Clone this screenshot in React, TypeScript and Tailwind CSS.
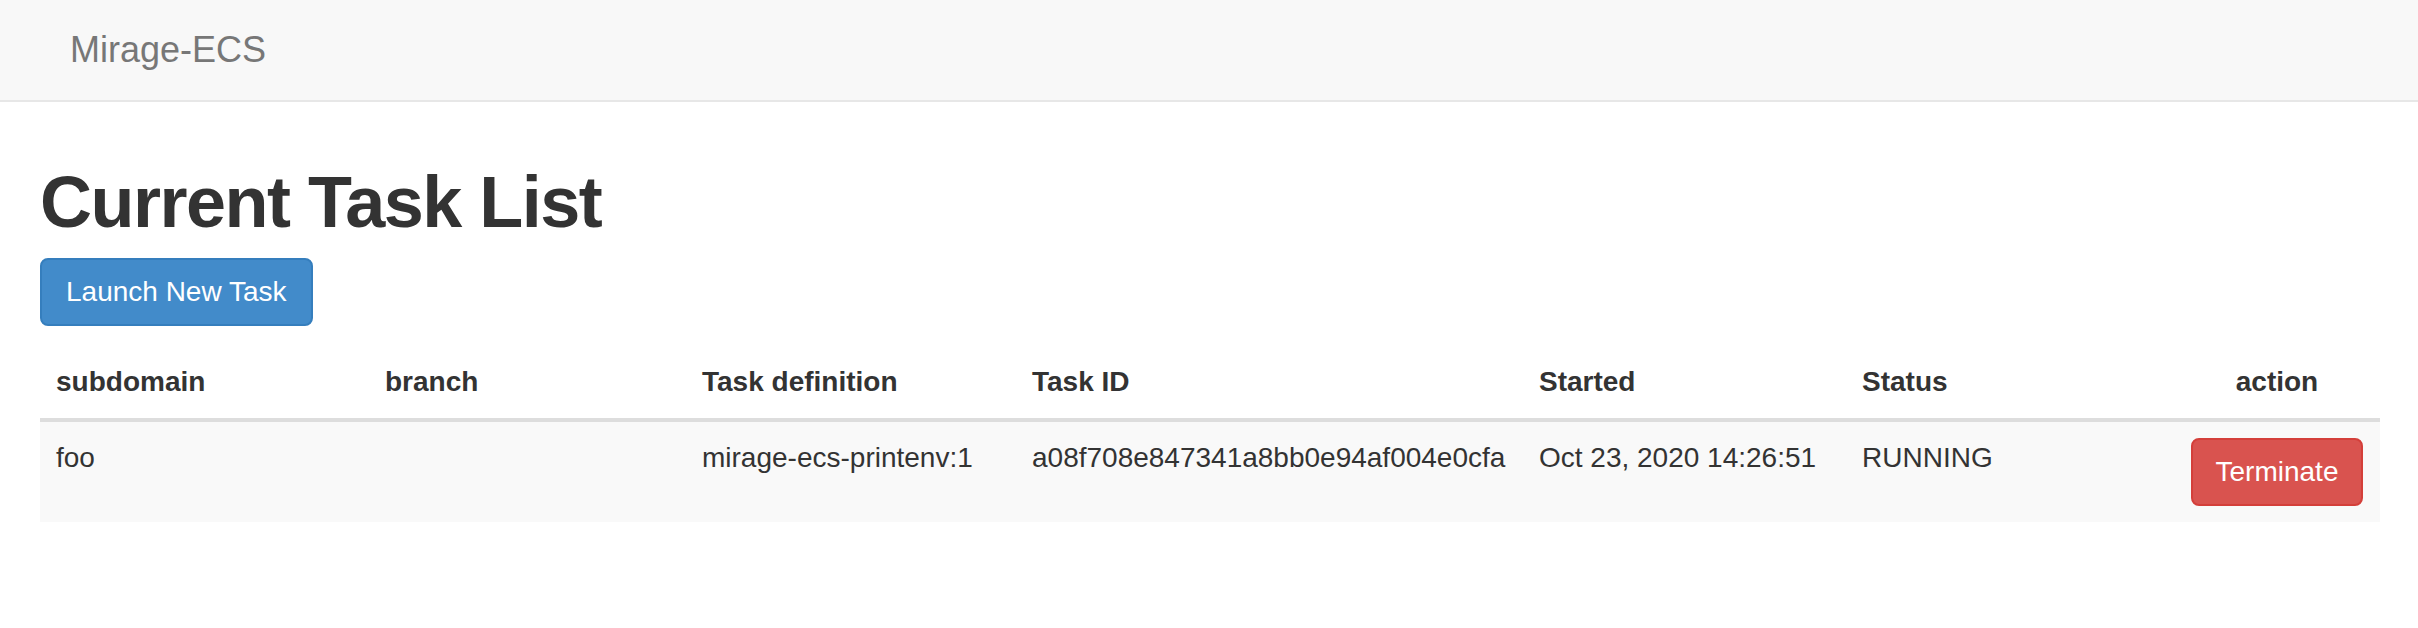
interface Task {
  subdomain: string;
  branch: string;
  taskDef: string;
  taskId: string;
  started: string;
  status: string;
}

const tasks: Task[] = [
  {
    subdomain: 'foo',
    branch: '',
    taskDef: 'mirage-ecs-printenv:1',
    taskId: 'a08f708e847341a8bb0e94af004e0cfa',
    started: 'Oct 23, 2020 14:26:51',
    status: 'RUNNING',
  },
];

const columns = [
  { label: 'subdomain', width: 'w-[329px]' },
  { label: 'branch', width: 'w-[317px]' },
  { label: 'Task definition', width: 'w-[330px]' },
  { label: 'Task ID', width: 'w-[507px]' },
  { label: 'Started', width: 'w-[323px]' },
  { label: 'Status', width: 'w-[328px]' },
];

export default function App() {
  return (
    <div className="min-h-[628px] bg-white text-[#333] font-['Liberation_Sans',Arial,sans-serif] text-[28px] leading-[40px]">
      <nav className="h-[102px] bg-[#f8f8f8] border-b-2 border-[#e7e7e7] px-[40px]">
        <a className="block px-[30px] py-[30px] text-[36px] leading-[40px] text-[#777]">
          Mirage-ECS
        </a>
      </nav>

      <div className="px-[40px]">
        <h1 className="mt-[60px] mb-[16px] text-[72px] leading-[80px] font-bold tracking-[-1.5px]">
          Current Task List
        </h1>
        <button className="h-[68px] px-[24px] rounded-[8px] border-2 border-[#357ebd] bg-[#428bca] text-white text-[28px] leading-[40px]">
          Launch New Task
        </button>

        <table className="mt-[20px] w-[2340px] table-fixed border-collapse">
          <thead>
            <tr>
              {columns.map((col) => (
                <th
                  key={col.label}
                  className={`${col.width} px-[16px] py-[16px] text-left font-bold border-b-4 border-[#ddd] align-bottom`}
                >
                  {col.label}
                </th>
              ))}
              <th className="w-[206px] px-[16px] py-[16px] text-center font-bold border-b-4 border-[#ddd] align-bottom">
                action
              </th>
            </tr>
          </thead>
          <tbody>
            {tasks.map((task) => (
              <tr key={task.taskId} className="bg-[#f9f9f9]">
                <td className="px-[16px] py-[16px] align-top">{task.subdomain}</td>
                <td className="px-[16px] py-[16px] align-top">{task.branch}</td>
                <td className="px-[16px] py-[16px] align-top whitespace-nowrap">{task.taskDef}</td>
                <td className="px-[16px] py-[16px] align-top whitespace-nowrap">{task.taskId}</td>
                <td className="px-[16px] py-[16px] align-top whitespace-nowrap">{task.started}</td>
                <td className="px-[16px] py-[16px] align-top">{task.status}</td>
                <td className="px-[16px] py-[16px] align-top text-center">
                  <button className="h-[68px] px-[23px] rounded-[8px] border-2 border-[#d43f3a] bg-[#d9534f] text-white text-[28px] leading-[40px]">
                    Terminate
                  </button>
                </td>
              </tr>
            ))}
          </tbody>
        </table>
      </div>
    </div>
  );
}
